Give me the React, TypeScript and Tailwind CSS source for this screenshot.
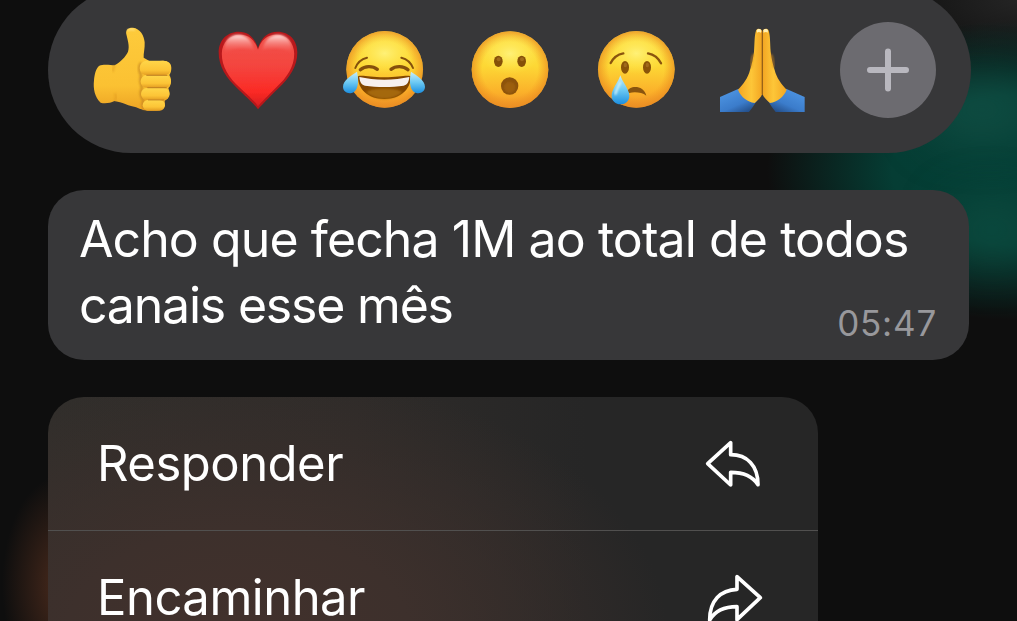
import type { ReactNode } from "react";

function Emoji({ className, children }: { className?: string; children: ReactNode }) {
  return (
    <svg
      viewBox="0 0 330 330"
      className={`size-[110px] shrink-0 ${className ?? ""}`}
    >
      {children}
    </svg>
  );
}

function EmojiColors() {
  return (
    <svg className="absolute size-0">
      <defs>
        <linearGradient id="face" x1="0" y1="0" x2="0" y2="1">
          <stop offset="0" stopColor="#fde04a" />
          <stop offset="0.45" stopColor="#fdd835" />
          <stop offset="0.8" stopColor="#fbb02a" />
          <stop offset="1" stopColor="#ee952a" />
        </linearGradient>
        <radialGradient id="rim" cx="0.5" cy="0.5" r="0.5">
          <stop offset="0.72" stopColor="#f08c1e" stopOpacity="0" />
          <stop offset="1" stopColor="#e88a20" stopOpacity="0.7" />
        </radialGradient>
        <radialGradient id="shine" cx="0.5" cy="0.5" r="0.5">
          <stop offset="0" stopColor="#fff27a" stopOpacity="0.95" />
          <stop offset="1" stopColor="#ffe94a" stopOpacity="0" />
        </radialGradient>
        <linearGradient id="tear" x1="0" y1="0" x2="0" y2="1">
          <stop offset="0" stopColor="#c9eefa" />
          <stop offset="0.5" stopColor="#6cc9f3" />
          <stop offset="1" stopColor="#1c8fe0" />
        </linearGradient>
        <linearGradient id="heart" x1="0" y1="0" x2="0" y2="1">
          <stop offset="0" stopColor="#f0544c" />
          <stop offset="0.45" stopColor="#f4443e" />
          <stop offset="0.8" stopColor="#fb2a25" />
          <stop offset="1" stopColor="#d81e20" />
        </linearGradient>
        <linearGradient id="gloss" x1="0" y1="0" x2="0" y2="1">
          <stop offset="0" stopColor="#ffe4e2" />
          <stop offset="1" stopColor="#f87068" stopOpacity="0" />
        </linearGradient>
        <linearGradient id="skin" x1="0" y1="0" x2="0" y2="1">
          <stop offset="0" stopColor="#fdcb3c" />
          <stop offset="0.7" stopColor="#fbc132" />
          <stop offset="1" stopColor="#eda324" />
        </linearGradient>
        <linearGradient id="finger" x1="0" y1="0" x2="0" y2="1">
          <stop offset="0" stopColor="#ffd649" />
          <stop offset="0.65" stopColor="#fcc436" />
          <stop offset="1" stopColor="#e39c22" />
        </linearGradient>
        <linearGradient id="palm" x1="0" y1="0" x2="1" y2="0">
          <stop offset="0" stopColor="#f3a623" />
          <stop offset="0.55" stopColor="#fdc638" />
          <stop offset="1" stopColor="#f3a522" />
        </linearGradient>
        <linearGradient id="sleeve" x1="0.3" y1="0" x2="1" y2="1">
          <stop offset="0" stopColor="#4d94e2" />
          <stop offset="0.55" stopColor="#3b7ccb" />
          <stop offset="1" stopColor="#1c3f73" />
        </linearGradient>
        <filter id="soft" x="-20%" y="-20%" width="140%" height="140%">
          <feGaussianBlur stdDeviation="2.5" />
        </filter>
      </defs>
    </svg>
  );
}

function Face() {
  return (
    <>
      <circle cx="164" cy="163" r="115" fill="url(#face)" />
      <circle cx="164" cy="163" r="115" fill="url(#rim)" />
      <ellipse cx="164" cy="115" rx="90" ry="62" fill="url(#shine)" />
    </>
  );
}

function ThumbsUp() {
  return (
    <Emoji>
      <path
        d="M58 152 C70 147 92 150 104 151 C122 140 138 124 144 110 C150 94 142 72 139 58 C136 43 146 37 159 38 C180 40 193 62 194 82 C195 100 190 116 191 128 L212 140 L248 137 C266 137 274 146 274 159 C274 168 272 175 268 180 C273 187 274 198 272 205 C271 213 269 216 265 219 C269 229 269 238 266 245 C263 251 259 254 254 257 C257 277 250 286 230 287 L202 287 C184 286 174 277 156 274 C140 270 130 264 120 262 L103 258 C92 264 74 267 62 263 C44 247 39 221 42 196 C44 176 48 160 58 152 Z"
        fill="url(#skin)"
      />
      <path
        d="M184 143 C169 162 183 174 183 184 C178 199 185 211 186 219 C178 235 183 246 190 256 C185 268 188 278 195 284"
        fill="none"
        stroke="#b9781c"
        strokeWidth="7"
        opacity="0.7"
        filter="url(#soft)"
      />
      <rect x="179" y="137" width="94" height="44" rx="22" fill="url(#finger)" />
      <rect x="182" y="181" width="91" height="37" rx="18" fill="url(#finger)" />
      <rect x="183" y="219" width="86" height="36" rx="18" fill="url(#finger)" />
      <rect x="188" y="255" width="67" height="32" rx="16" fill="url(#finger)" />
      <path
        d="M199 181 H262 M202 218 H260 M204 255 H252"
        stroke="#b97a20"
        strokeWidth="3.5"
        opacity="0.75"
      />
      <path
        d="M103 258 C109 252 109 243 105 235 M104 151 C100 157 98 164 100 170"
        fill="none"
        stroke="#d9921f"
        strokeWidth="5"
        opacity="0.6"
        filter="url(#soft)"
      />
      <path d="M144 48 C146 42 156 41 164 45" fill="none" stroke="#ffe68a" strokeWidth="5" filter="url(#soft)" />
    </Emoji>
  );
}

function Heart() {
  const shape =
    "M159 283 C150 270 132 253 101 224 C62 188 41 154 41 112 C41 76 66 50 101 50 C129 50 148 66 159 99 C169 66 190 50 218 50 C253 50 277 76 277 112 C277 154 255 188 218 222 C188 252 170 270 159 283 Z";
  return (
    <Emoji className="ml-[15px]">
      <path d={shape} fill="#b8181b" />
      <path
        d={shape}
        fill="url(#heart)"
        filter="url(#soft)"
        transform="translate(159 163) scale(.92) translate(-159 -163)"
      />
      <path d="M59 113 C54 79 73 59 99 59 C126 59 142 79 148 107 C126 96 85 98 59 113 Z" fill="url(#gloss)" filter="url(#soft)" />
      <path d="M171 107 C177 79 193 59 219 59 C245 59 264 79 259 113 C233 98 194 96 171 107 Z" fill="url(#gloss)" filter="url(#soft)" />
    </Emoji>
  );
}

function Joy() {
  return (
    <Emoji className="ml-[15px]">
      <Face />
      <g fill="none" stroke="#85500c" strokeLinecap="round">
        <path d="M76 159 C82 143 94 132 111 128" strokeWidth="6" />
        <path d="M214 128 C230 132 243 143 249 159" strokeWidth="6" />
        <path d="M91 164 C105 152 128 152 142 163" strokeWidth="10" />
        <path d="M183 163 C197 152 220 152 234 164" strokeWidth="10" />
      </g>
      <path
        d="M84 184 C96 179 120 187 163 187 C206 187 230 179 242 184 C243 222 213 252 163 252 C113 252 83 222 84 184 Z"
        fill="#824600"
      />
      <path d="M108 231 C132 217 194 217 218 231 C190 258 136 258 108 231 Z" fill="#a46808" filter="url(#soft)" />
      <path d="M88 186 C110 191 136 194 163 194 C190 194 216 191 238 186 C237 201 231 210 221 212 C186 217 140 217 105 212 C95 210 89 201 88 186 Z" fill="#f7f0ef" />
      <path d="M81 170 C64 182 39 195 39 216 C40 230 52 237 65 234 C84 229 88 202 81 170 Z" fill="url(#tear)" />
      <path d="M243 170 C260 182 285 195 285 216 C284 230 272 237 259 234 C240 229 236 202 243 170 Z" fill="url(#tear)" />
    </Emoji>
  );
}

function Surprised() {
  return (
    <Emoji className="ml-[15px]">
      <g transform="translate(1 1)">
        <Face />
      </g>
      <ellipse cx="130" cy="139" rx="13" ry="17" fill="#855008" />
      <ellipse cx="200" cy="139" rx="13" ry="17" fill="#855008" />
      <ellipse cx="131" cy="133" rx="6" ry="6" fill="#a06a1c" />
      <ellipse cx="201" cy="133" rx="6" ry="6" fill="#a06a1c" />
      <circle cx="164" cy="213" r="26" fill="#8b520c" />
      <circle cx="164" cy="217" r="17" fill="#9c5f0d" filter="url(#soft)" />
    </Emoji>
  );
}

function Crying() {
  return (
    <Emoji className="ml-[17px]">
      <g transform="translate(-1 0)">
        <Face />
      </g>
      <g fill="none" stroke="#8a540e" strokeLinecap="round" strokeWidth="7">
        <path d="M86 144 C94 128 107 118 124 115" />
        <path d="M198 115 C215 118 229 129 237 145" />
      </g>
      <ellipse cx="129" cy="157" rx="12" ry="19" fill="#8a5409" />
      <ellipse cx="195" cy="157" rx="12" ry="19" fill="#8a5409" />
      <ellipse cx="130" cy="150" rx="5" ry="7" fill="#a06a1c" />
      <ellipse cx="196" cy="150" rx="5" ry="7" fill="#a06a1c" />
      <path d="M136 230 C139 212 185 207 193 242 C180 232 158 230 142 234 Z" fill="#8a540e" />
      <path
        d="M115 181 C109 202 89 222 89 243 C89 258 101 268 116 268 C131 268 142 257 142 243 C142 222 121 202 115 181 Z"
        fill="url(#tear)"
      />
      <path d="M115 201 C109 216 101 228 100 239" fill="none" stroke="#d8f4fc" strokeWidth="6" filter="url(#soft)" />
    </Emoji>
  );
}

function PrayHalf() {
  return (
    <>
      <path d="M36 246 L92 221 C104 242 120 253 146 258 C139 270 131 281 123 291 L36 291 Z" fill="url(#sleeve)" />
      <path
        d="M144 47 C147 39 159 39 162 48 L163 236 C159 247 149 256 140 264 C118 261 99 246 90 224 C107 206 120 189 126 165 C133 142 135 131 138 110 C140 84 139 62 144 47 Z"
        fill="url(#palm)"
      />
      <path d="M146 46 C149 41 157 41 160 46 L159 53 C155 50 150 50 147 53 Z" fill="#fff0b4" />
      <path d="M162.5 52 V238" stroke="#8f5a16" strokeWidth="2.5" />
      <path d="M138 118 C132 121 130 142 129 158" fill="none" stroke="#d88a18" strokeWidth="4" filter="url(#soft)" />
    </>
  );
}

function Pray() {
  return (
    <Emoji className="ml-4">
      <PrayHalf />
      <g transform="translate(326 0) scale(-1 1)">
        <PrayHalf />
      </g>
    </Emoji>
  );
}

function ReactionBar() {
  return (
    <div className="-mt-[13px] flex h-[166px] w-[923px] shrink-0 items-center rounded-full bg-[#373739] pl-8">
      <ThumbsUp />
      <Heart />
      <Joy />
      <Surprised />
      <Crying />
      <Pray />
      <button className="ml-[22px] flex size-24 items-center justify-center rounded-full bg-[#6c6b70]">
        <svg
          viewBox="0 0 44 44"
          className="size-11"
          stroke="#b9b8bf"
          strokeWidth="6"
          strokeLinecap="round"
        >
          <path d="M22 3.5V40.5M4 22H40" />
        </svg>
      </button>
    </div>
  );
}

function Message() {
  return (
    <div className="mt-[37px] flex h-[170px] w-[921px] shrink-0 flex-col rounded-[36px] bg-[#373739] pt-4 pr-8 pl-[31px] text-[50px] leading-[66px] whitespace-nowrap text-white">
      <p className="tracking-[-0.92px]">Acho que fecha 1M ao total de todos</p>
      <div className="flex items-start justify-between">
        <p className="tracking-[-1.2px]">canais esse mês</p>
        <time className="pt-[18px] text-[35px] tracking-[0.8px] text-[#98989c]">
          05:47
        </time>
      </div>
    </div>
  );
}

function MenuItem({ label, icon }: { label: string; icon: string }) {
  return (
    <button className="flex h-[134px] w-full items-center justify-between border-b border-[#51504f] pr-[53px] pl-[49px] text-[49px] tracking-[-0.5px] text-white">
      <span className="pt-px">{label}</span>
      <svg
        viewBox="45 30 180 144"
        className="h-12 w-[60px]"
        fill="none"
        stroke="white"
        strokeWidth="11"
        strokeLinejoin="round"
      >
        <path d={icon} />
      </svg>
    </button>
  );
}

const REPLY =
  "M53 101 L122 38 V74 C171 74 204 106 204 164 C188 139 162 127 122 127 V165 Z";
const FORWARD =
  "M211 101 L141 38 V76 C92 78 59 109 59 168 C75 141 101 128 141 128 V167 Z";

function App() {
  return (
    <div className="relative h-[621px] w-full overflow-hidden bg-[#0e0e0e] font-['Inter',sans-serif]">
      <div className="absolute inset-0 bg-[radial-gradient(ellipse_250px_150px_at_1017px_170px,#053f36_0%,#053d34_50%,#053d3480_75%,#053d3400_100%),radial-gradient(ellipse_60px_110px_at_62px_585px,#4a2a1c_0%,#4a2a1c00_100%),radial-gradient(ellipse_150px_70px_at_1017px_0px,#242424,#0e0e0e)]" />
      <div className="absolute top-[80px] right-[-20px] h-[60px] w-[110px] rounded-full bg-[#17594c]/60 blur-xl" />
      <div className="absolute top-[200px] right-[-20px] h-[60px] w-[90px] rounded-full bg-[#115446]/60 blur-xl" />
      <EmojiColors />
      <main className="relative flex flex-col items-start pl-12">
        <ReactionBar />
        <Message />
        <div className="mt-[37px] w-[770px] shrink-0 overflow-hidden rounded-t-[36px] bg-[#262626] bg-[radial-gradient(ellipse_430px_270px_at_190px_240px,#42312c_0%,#3d302c_40%,#26262600_100%),linear-gradient(90deg,#302e2b,#2e2b29_40%,#262626_70%)]">
          <MenuItem label="Responder" icon={REPLY} />
          <MenuItem label="Encaminhar" icon={FORWARD} />
        </div>
      </main>
    </div>
  );
}

export default App;
